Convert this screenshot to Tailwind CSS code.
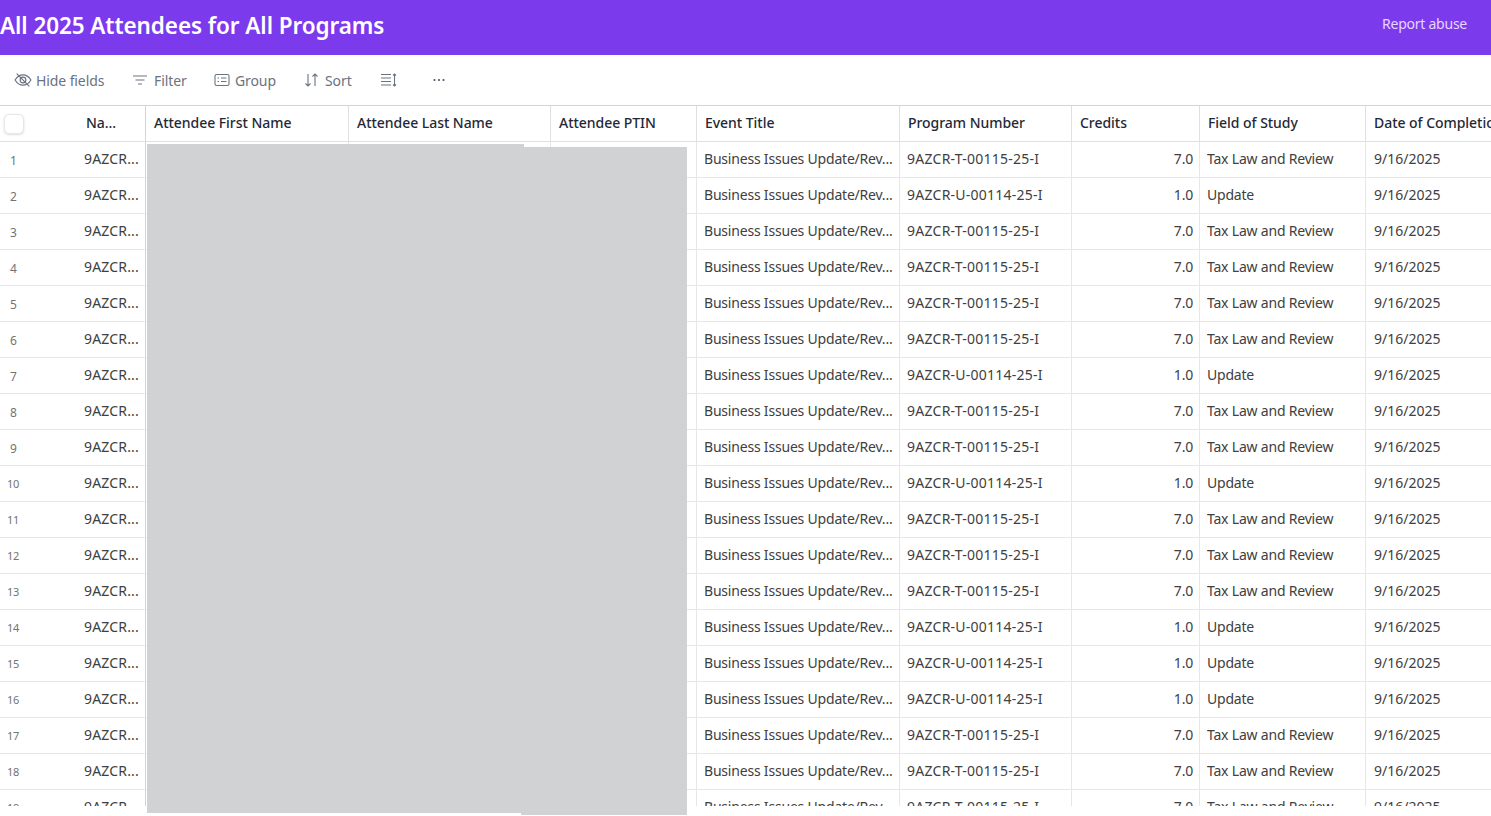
<!DOCTYPE html>
<html lang="en">
<head>
  <meta charset="UTF-8">
  <title>All 2025 Attendees for All Programs</title>
  <script src="https://cdn.jsdelivr.net/npm/@tailwindcss/browser@4"></script>
</head>
<body class="bg-white overflow-hidden font-['Noto_Sans',sans-serif]">
  <div class="relative h-[816px] w-[1491px] overflow-hidden">

    <!-- Title bar -->
    <header class="h-[55px] bg-[#7c3aed] flex items-center justify-between pr-6 text-white">
      <h1 class="text-[22.5px] font-semibold tracking-[-0.08px] -mt-1">All 2025 Attendees for All Programs</h1>
      <a class="text-sm text-[#e9d5ff] tracking-[-0.25px] -mt-[7px]">Report abuse</a>
    </header>

    <!-- Toolbar -->
    <div class="h-[50px] flex items-center text-[14px] tracking-[-0.1px] text-[#6b7280] pl-[14px]">
      <div class="flex items-center gap-[4px] w-[118px]">
        <svg class="w-[18px] h-[18px]" viewBox="0 0 17 17" fill="none" stroke="#6b7280" stroke-width="1.1"><path d="M1 8.5C3 5.2 5.6 3.6 8.5 3.6s5.5 1.6 7.5 4.9c-2 3.3-4.6 4.9-7.5 4.9S3 11.8 1 8.5z"/><circle cx="8.5" cy="8.5" r="2.7"/><path d="M2.5 2.5l12 12"/></svg>
        <span>Hide fields</span>
      </div>
      <div class="flex items-center gap-[6px] w-[82px]">
        <svg class="w-[16px] h-[16px]" viewBox="0 0 16 16" fill="none" stroke="#6b7280" stroke-width="1.2"><path d="M1 4h14M3.5 8h9M6 12h4"/></svg>
        <span>Filter</span>
      </div>
      <div class="flex items-center gap-[5px] w-[90px]">
        <svg class="w-[16px] h-[16px]" viewBox="0 0 16 16" fill="none" stroke="#6b7280" stroke-width="1.1"><rect x="1" y="2.5" width="14" height="11" rx="1.5"/><path d="M3.5 6H5M3.5 9.500H5M7 6h5.500M7 9.500h5.500"/></svg>
        <span>Group</span>
      </div>
      <div class="flex items-center gap-[6px] w-[76px]">
        <svg class="w-[15px] h-[16px]" viewBox="0 0 15 16" fill="none" stroke="#6b7280" stroke-width="1.1"><path d="M4 2v12M1.5 11.5L4 14l2.5-2.5M11 14V2M8.5 4.5L11 2l2.5 2.5"/></svg>
        <span>Sort</span>
      </div>
      <div class="w-[53px] flex items-center">
        <svg class="w-[18px] h-[16px]" viewBox="0 0 18 16" fill="none" stroke="#6b7280" stroke-width="1.1"><path d="M1 2.5h10M1 6h10M1 9.5h10M1 13h10M14.5 2v12M13 3.5L14.5 2 16 3.5M13 12.5l1.5 1.5 1.5-1.5"/></svg>
      </div>
      <svg class="w-[12px] h-[4px] -mt-[1px]" viewBox="0 0 12 4" fill="#4b5563"><circle cx="1.5" cy="2" r="1.1"/><circle cx="6" cy="2" r="1.1"/><circle cx="10.5" cy="2" r="1.1"/></svg>
    </div>

    <!-- Grid -->
    <div class="h-[701px] overflow-hidden border-t border-[#d1d5db]">
      <div class="grid grid-cols-[146px_203px_202px_146px_203px_172px_128px_166px_200px] h-[36px] border-b border-[#e0e0e0] text-[14px] font-medium tracking-[-0.04px] text-[#1f2937] whitespace-nowrap">
        <div class="flex items-center border-r border-[#d4d4d8]">
          <span class="w-[20px] h-[20px] ml-1 rounded-[5px] border border-[#e5e7eb] bg-white shadow-sm"></span>
          <span class="ml-[62px] pb-[2px]">Na...</span>
        </div>
        <div class="flex items-center pl-2 pb-[2px] border-r border-[#e0e0e0]">Attendee First Name</div>
        <div class="flex items-center pl-2 pb-[2px] border-r border-[#e0e0e0]">Attendee Last Name</div>
        <div class="flex items-center pl-2 pb-[2px] border-r border-[#e0e0e0]">Attendee PTIN</div>
        <div class="flex items-center pl-2 pb-[2px] border-r border-[#e0e0e0]">Event Title</div>
        <div class="flex items-center pl-2 pb-[2px] border-r border-[#e0e0e0]">Program Number</div>
        <div class="flex items-center pl-2 pb-[2px] border-r border-[#e0e0e0]">Credits</div>
        <div class="flex items-center pl-2 pb-[2px] border-r border-[#e0e0e0]">Field of Study</div>
        <div class="flex items-center pl-2 pb-[2px] overflow-hidden">Date of Completion</div>
      </div>
      <div id="rows"></div>
    </div>

    <!-- Redaction blocks over the name and PTIN columns -->
    <div class="absolute left-[147px] top-[144px] w-[377px] h-[669px] bg-[#d1d2d4]"></div>
    <div class="absolute left-[521px] top-[147px] w-[166px] h-[668px] bg-[#d1d2d4]"></div>
  </div>

  <script>
    const programs = {
      T: { number: "9AZCR-T-00115-25-I", credits: "7.0", field: "Tax Law and Review" },
      U: { number: "9AZCR-U-00114-25-I", credits: "1.0", field: "Update" }
    };
    const order = "TUTTTTUTTUTTTUUUTTT".split("");

    document.getElementById("rows").innerHTML = order.map((key, i) => {
      const p = programs[key];
      const num = i > 8
        ? `<span class="w-[84px] pl-[7px] pt-[1px] text-[11px] tracking-[-0.2px] text-[#737373]">${i + 1}</span>`
        : `<span class="w-[84px] pl-[10px] pt-[3px] text-[12px] text-[#737373]">${i + 1}</span>`;
      return `
      <div class="grid grid-cols-[146px_203px_202px_146px_203px_172px_128px_166px_200px] h-[36px] border-b border-[#e5e7eb] text-[14px] tracking-[-0.2px] text-[#404040] whitespace-nowrap">
        <div class="flex items-center border-r border-[#d4d4d8]">
          ${num}
          <span class="pb-[2px] tracking-[0.15px]">9AZCR...</span>
        </div>
        <div class="border-r border-[#e5e7eb]"></div>
        <div class="border-r border-[#e5e7eb]"></div>
        <div class="border-r border-[#e5e7eb]"></div>
        <div class="flex items-center pl-[7px] pb-[2px] border-r border-[#e5e7eb]">Business Issues Update/Rev...</div>
        <div class="flex items-center pl-[7px] pb-[2px] tracking-[0.24px] border-r border-[#e5e7eb]">${p.number}</div>
        <div class="flex items-center justify-end pr-[6px] pb-[2px] border-r border-[#e5e7eb]">${p.credits}</div>
        <div class="flex items-center pl-[7px] pb-[2px] border-r border-[#e5e7eb]">${p.field}</div>
        <div class="flex items-center pl-2 pb-[2px] tracking-[0px]">9/16/2025</div>
      </div>`;
    }).join("");
  </script>
</body>
</html>
